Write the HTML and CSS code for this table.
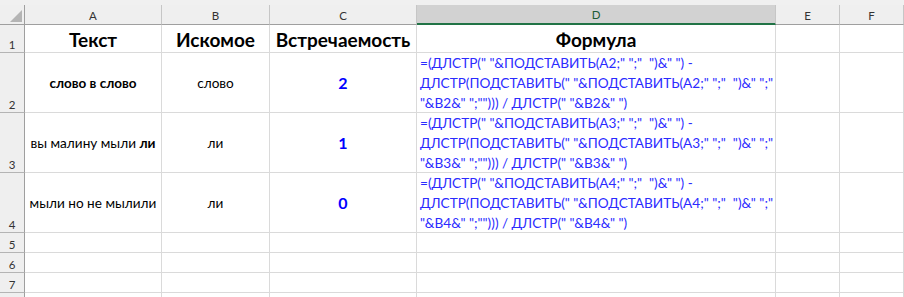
FILE: index.html
```html
<!DOCTYPE html>
<html lang="ru">
<head>
<meta charset="utf-8">
<title>Sheet</title>
<link rel="stylesheet" href="styles.css">
</head>
<body>
<div class="sheet">
  <div class="strip"></div>

  <div class="hd corner"><span class="tri"></span></div>
  <div class="hd">A</div>
  <div class="hd">B</div>
  <div class="hd">C</div>
  <div class="hd sel">D</div>
  <div class="hd">E</div>
  <div class="hd">F</div>

  <div class="rh">1</div>
  <div class="c title">Текст</div>
  <div class="c title">Искомое</div>
  <div class="c title">Встречаемость</div>
  <div class="c title">Формула</div>
  <div class="c"></div>
  <div class="c"></div>

  <div class="rh">2</div>
  <div class="c small-b">слово в слово</div>
  <div class="c">слово</div>
  <div class="c num">2</div>
  <div class="c formula"><span class="ln">=(ДЛСТР(" "&amp;ПОДСТАВИТЬ(A2;" ";"  ")&amp;" ") -</span><span class="ln">ДЛСТР(ПОДСТАВИТЬ(" "&amp;ПОДСТАВИТЬ(A2;" ";"  ")&amp;" ";"</span><span class="ln">"&amp;B2&amp;" ";""))) / ДЛСТР(" "&amp;B2&amp;" ")</span></div>
  <div class="c"></div>
  <div class="c"></div>

  <div class="rh">3</div>
  <div class="c">вы малину мыли&nbsp;<b>ли</b></div>
  <div class="c">ли</div>
  <div class="c num">1</div>
  <div class="c formula"><span class="ln">=(ДЛСТР(" "&amp;ПОДСТАВИТЬ(A3;" ";"  ")&amp;" ") -</span><span class="ln">ДЛСТР(ПОДСТАВИТЬ(" "&amp;ПОДСТАВИТЬ(A3;" ";"  ")&amp;" ";"</span><span class="ln">"&amp;B3&amp;" ";""))) / ДЛСТР(" "&amp;B3&amp;" ")</span></div>
  <div class="c"></div>
  <div class="c"></div>

  <div class="rh">4</div>
  <div class="c">мыли но не мылили</div>
  <div class="c">ли</div>
  <div class="c num">0</div>
  <div class="c formula"><span class="ln">=(ДЛСТР(" "&amp;ПОДСТАВИТЬ(A4;" ";"  ")&amp;" ") -</span><span class="ln">ДЛСТР(ПОДСТАВИТЬ(" "&amp;ПОДСТАВИТЬ(A4;" ";"  ")&amp;" ";"</span><span class="ln">"&amp;B4&amp;" ";""))) / ДЛСТР(" "&amp;B4&amp;" ")</span></div>
  <div class="c"></div>
  <div class="c"></div>

  <div class="rh">5</div>
  <div class="c"></div><div class="c"></div><div class="c"></div><div class="c"></div><div class="c"></div><div class="c"></div>
  <div class="rh">6</div>
  <div class="c"></div><div class="c"></div><div class="c"></div><div class="c"></div><div class="c"></div><div class="c"></div>
  <div class="rh">7</div>
  <div class="c"></div><div class="c"></div><div class="c"></div><div class="c"></div><div class="c"></div><div class="c"></div>
  <div class="rh empty"></div>
  <div class="c"></div><div class="c"></div><div class="c"></div><div class="c"></div><div class="c"></div><div class="c"></div>
</div>
</body>
</html>
```

FILE: styles.css
```css
* { box-sizing: border-box; }
html, body { margin: 0; padding: 0; background: #ffffff; }
body {
  font-family: Lato, "Open Sans", "Liberation Sans", sans-serif;
  color: #000;
  width: 904px;
  height: 297px;
  overflow: hidden;
}
.sheet {
  display: grid;
  grid-template-columns: 25px 137px 108px 147px 359px 64px 64px;
  grid-template-rows: 5px 20px 28px 60px 60px 60px 20px 20px 20px 5px;
  width: 904px;
}
.strip {
  grid-column: 1 / -1;
  background: #f0f0f0;
}
.hd {
  background: #efefef;
  border-right: 1px solid #c6c6c6;
  border-bottom: 1px solid #9f9f9f;
  display: flex;
  align-items: center;
  justify-content: center;
  font-size: 11.5px;
  color: #333;
  padding-top: 1px;
}
.hd.sel {
  background: #d2d2d2;
  border-bottom: 2px solid #217346;
  color: #1d5a37;
}
.corner {
  border-right-color: #9f9f9f;
  align-items: flex-end;
  justify-content: flex-end;
  padding: 0 2px 2px 0;
}
.tri {
  display: block;
  width: 12px;
  height: 12px;
  background: #b4b4b4;
  clip-path: polygon(100% 0, 100% 100%, 0 100%);
}
.rh {
  background: #efefef;
  border-right: 1px solid #9f9f9f;
  border-bottom: 1px solid #b4b4b4;
  display: flex;
  align-items: flex-end;
  justify-content: center;
  font-size: 11.5px;
  color: #333;
  padding-bottom: 1px;
}
.rh.empty { border-bottom: 0; }
.c {
  border-right: 1px solid #dadada;
  border-bottom: 1px solid #dadada;
  display: flex;
  align-items: center;
  justify-content: center;
  font-size: 13.6px;
  white-space: nowrap;
}
.c b { font-weight: 700; }
.title {
  font-size: 19px;
  font-weight: 700;
  padding-top: 2px;
}
.small-b {
  font-size: 13.5px;
  font-weight: 700;
}
.num {
  font-size: 16px;
  font-weight: 700;
  color: #0000ff;
}
.formula {
  flex-direction: column;
  align-items: flex-start;
  justify-content: flex-start;
  padding-left: 3px;
  font-size: 13.6px;
  line-height: 20px;
  color: #2b2bff;
  white-space: pre;
}
.ln { display: block; }
```
